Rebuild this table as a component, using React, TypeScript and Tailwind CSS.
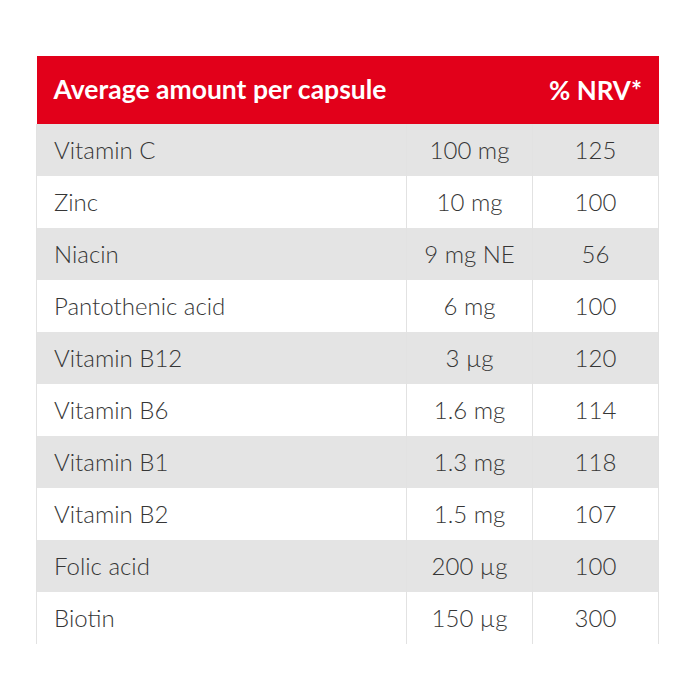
import React from 'react';

const rows: [string, string, string][] = [
  ['Vitamin C', '100 mg', '125'],
  ['Zinc', '10 mg', '100'],
  ['Niacin', '9 mg NE', '56'],
  ['Pantothenic acid', '6 mg', '100'],
  ['Vitamin B12', '3 µg', '120'],
  ['Vitamin B6', '1.6 mg', '114'],
  ['Vitamin B1', '1.3 mg', '118'],
  ['Vitamin B2', '1.5 mg', '107'],
  ['Folic acid', '200 µg', '100'],
  ['Biotin', '150 µg', '300'],
];

export default function App() {
  return (
    <div className="w-[700px] h-[700px] bg-white pt-[56px] pl-[36px]">
      <table
        className="w-[622px] table-fixed border-collapse text-[#363636] font-light"
        style={{ fontFamily: 'Lato, "Open Sans", sans-serif' }}
      >
        <colgroup>
          <col className="w-[370px]" />
          <col className="w-[126px]" />
          <col className="w-[126px]" />
        </colgroup>
        <thead>
          <tr className="h-[68px] bg-[#e2001a] text-white">
            <th colSpan={2} className="text-left pl-[17px] text-[26.5px] font-bold">
              Average amount per capsule
            </th>
            <th className="text-center text-[26px] font-bold">% NRV*</th>
          </tr>
        </thead>
        <tbody>
          {rows.map(([name, amount, nrv], i) => (
            <tr key={name} className={i % 2 === 0 ? 'h-[52px] bg-[#e4e4e4]' : 'h-[52px] bg-white'}>
              <td className="pl-[17px] text-[24px] border-x border-[#e2e2e2]">{name}</td>
              <td className="text-center text-[24px] border-x border-[#e2e2e2]">{amount}</td>
              <td className="text-center text-[24px] border-x border-[#e2e2e2]">{nrv}</td>
            </tr>
          ))}
        </tbody>
      </table>
    </div>
  );
}
